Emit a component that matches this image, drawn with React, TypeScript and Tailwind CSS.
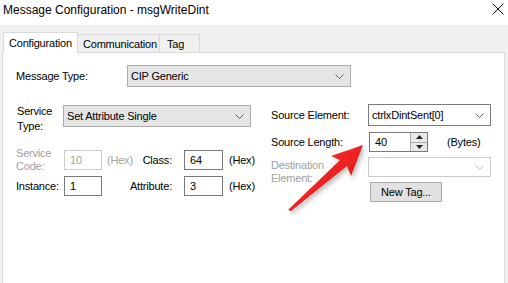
const Chevron = ({ color = "#5f5f5f" }: { color?: string }) => (
  <svg width="9" height="5" viewBox="0 0 9 5" className="shrink-0">
    <path d="M0.5 0.5 L4.5 4.5 L8.5 0.5" fill="none" stroke={color} strokeWidth="1" />
  </svg>
);

const TextBox = ({ value, disabled = false, w }: { value: string; disabled?: boolean; w: string }) => (
  <div
    className={`${w} h-[20px] shrink-0 flex items-center pl-[5px] border bg-white ${
      disabled ? "border-[#cccccc] text-[#a0a0a0]" : "border-[#7a7a7a] text-black"
    }`}
  >
    {value}
  </div>
);

const Arrow = () => (
  <svg width="508" height="283" viewBox="0 0 508 283" className="absolute left-0 top-0 pointer-events-none">
    <defs>
      <linearGradient id="redg" x1="0" y1="0" x2="1" y2="1">
        <stop offset="0" stopColor="#ff3b3b" />
        <stop offset="1" stopColor="#d90b0b" />
      </linearGradient>
      <filter id="sh" x="-20%" y="-20%" width="150%" height="150%">
        <feDropShadow dx="2" dy="3" stdDeviation="2" floodColor="#000" floodOpacity="0.25" />
      </filter>
    </defs>
    <polygon
      points="363,145 331,156 340,160 288,210 291,211 347,166 351,176"
      fill="url(#redg)"
      filter="url(#sh)"
    />
  </svg>
);

const App = () => {
  return (
    <div className="relative w-[508px] h-[283px] overflow-hidden bg-[#f0f0f0] font-['Liberation_Sans',Arial,sans-serif] text-black">
      {/* Title bar */}
      <div className="h-[25px] bg-white flex items-start justify-between pl-[3px] pr-[4px] pt-[3px]">
        <span className="text-[12px] leading-[14px]">Message Configuration - msgWriteDint</span>
        <svg width="12" height="12" viewBox="0 0 12 12">
          <path d="M0.5 0.5 L11.5 11.5 M11.5 0.5 L0.5 11.5" stroke="#111" strokeWidth="1" />
        </svg>
      </div>

      {/* Tabs */}
      <div className="pt-[7px] pl-[3px] flex items-end h-[27px] text-[11px] tracking-[-0.2px] leading-[14px]">
        <div className="relative z-10 w-[75px] h-[21px] -mb-[1px] bg-white border border-b-0 border-[#d9d9d9] pl-[5px] pt-[3px]">
          Configuration
        </div>
        <div className="w-[82px] h-[18px] border border-l-0 border-b-0 border-[#d9d9d9] pl-[5px] pt-[2px]">
          Communication
        </div>
        <div className="w-[40px] h-[18px] border border-l-0 border-b-0 border-[#d9d9d9] pl-[7px] pt-[2px]">
          Tag
        </div>
      </div>

      {/* Panel */}
      <div className="ml-[2px] w-[503px] h-[240px] bg-white border border-[#d9d9d9] text-[11px] tracking-[-0.2px] leading-[13px]">
        {/* Message type */}
        <div className="mt-[12px] pl-[13px] h-[22px] flex items-center">
          <span className="w-[111px] shrink-0">Message Type:</span>
          <div className="w-[224px] h-[22px] bg-[#e5e5e5] border border-[#acacac] flex items-center justify-between pl-[3px] pr-[6px]">
            <span>CIP Generic</span>
            <Chevron />
          </div>
        </div>

        <div className="mt-[17px] pl-[13px] flex">
          {/* Left column */}
          <div className="w-[255px] shrink-0 flex flex-col pt-[1px]">
            <div className="h-[22px] flex items-start">
              <span className="w-[47px] shrink-0 pl-[1px] -mt-[1px] leading-[15px]">
                Service
                <br />
                Type:
              </span>
              <div className="w-[188px] h-[22px] bg-[#e5e5e5] border border-[#acacac] flex items-center justify-between pl-[3px] pr-[6px]">
                <span>Set Attribute Single</span>
                <Chevron />
              </div>
            </div>

            <div className="mt-[23px] h-[20px] flex items-center">
              <span className="w-[48px] shrink-0 text-[#a0a0a0]">
                Service
                <br />
                Code:
              </span>
              <TextBox value="10" disabled w="w-[38px]" />
              <div className="w-[70px] shrink-0 flex justify-between">
                <span className="pl-[5px] text-[#a0a0a0]">(Hex)</span>
                <span>Class:</span>
              </div>
              <div className="ml-[12px]">
                <TextBox value="64" w="w-[39px]" />
              </div>
              <span className="ml-[6px]">(Hex)</span>
            </div>

            <div className="mt-[6px] h-[20px] flex items-center">
              <span className="w-[48px] shrink-0">Instance:</span>
              <TextBox value="1" w="w-[38px]" />
              <span className="w-[70px] shrink-0 text-right">Attribute:</span>
              <div className="ml-[12px]">
                <TextBox value="3" w="w-[39px]" />
              </div>
              <span className="ml-[6px]">(Hex)</span>
            </div>
          </div>

          {/* Right column */}
          <div className="flex flex-col">
            <div className="h-[22px] flex items-center">
              <span className="w-[97px] shrink-0">Source Element:</span>
              <div className="w-[123px] h-[22px] bg-white border border-[#7a7a7a] flex items-center justify-between pl-[3px] pr-[6px]">
                <span>ctrlxDintSent[0]</span>
                <Chevron />
              </div>
            </div>

            <div className="mt-[6px] h-[20px] flex items-center">
              <span className="w-[98px] shrink-0">Source Length:</span>
              <div className="w-[59px] h-[20px] border border-[#7a7a7a] bg-white flex">
                <span className="flex-1 pl-[5px] flex items-center">40</span>
                <div className="w-[17px] flex flex-col border-l border-[#acacac] bg-[#e8e8e8]">
                  <div className="flex-1 flex items-center justify-center border-b border-[#acacac]">
                    <svg width="7" height="4" viewBox="0 0 7 4">
                      <path d="M0 4 L3.5 0 L7 4 Z" fill="#222" />
                    </svg>
                  </div>
                  <div className="flex-1 flex items-center justify-center">
                    <svg width="7" height="4" viewBox="0 0 7 4">
                      <path d="M0 0 L3.5 4 L7 0 Z" fill="#222" />
                    </svg>
                  </div>
                </div>
              </div>
              <span className="ml-[19px]">(Bytes)</span>
            </div>

            <div className="mt-[5px] h-[20px] flex items-start">
              <span className="w-[97px] shrink-0 mt-[2px] text-[#a0a0a0]">
                Destination
                <br />
                Element:
              </span>
              <div className="w-[123px] h-[20px] bg-white border border-[#cccccc] flex items-center justify-end pr-[6px]">
                <Chevron color="#bdbdbd" />
              </div>
            </div>

            <div className="mt-[5px] h-[20px] flex items-center">
              <button className="ml-[99px] w-[72px] h-[20px] bg-[#e1e1e1] border border-[#adadad] flex items-center justify-center">
                New Tag...
              </button>
            </div>
          </div>
        </div>
      </div>

      <Arrow />
    </div>
  );
};

export default App;
